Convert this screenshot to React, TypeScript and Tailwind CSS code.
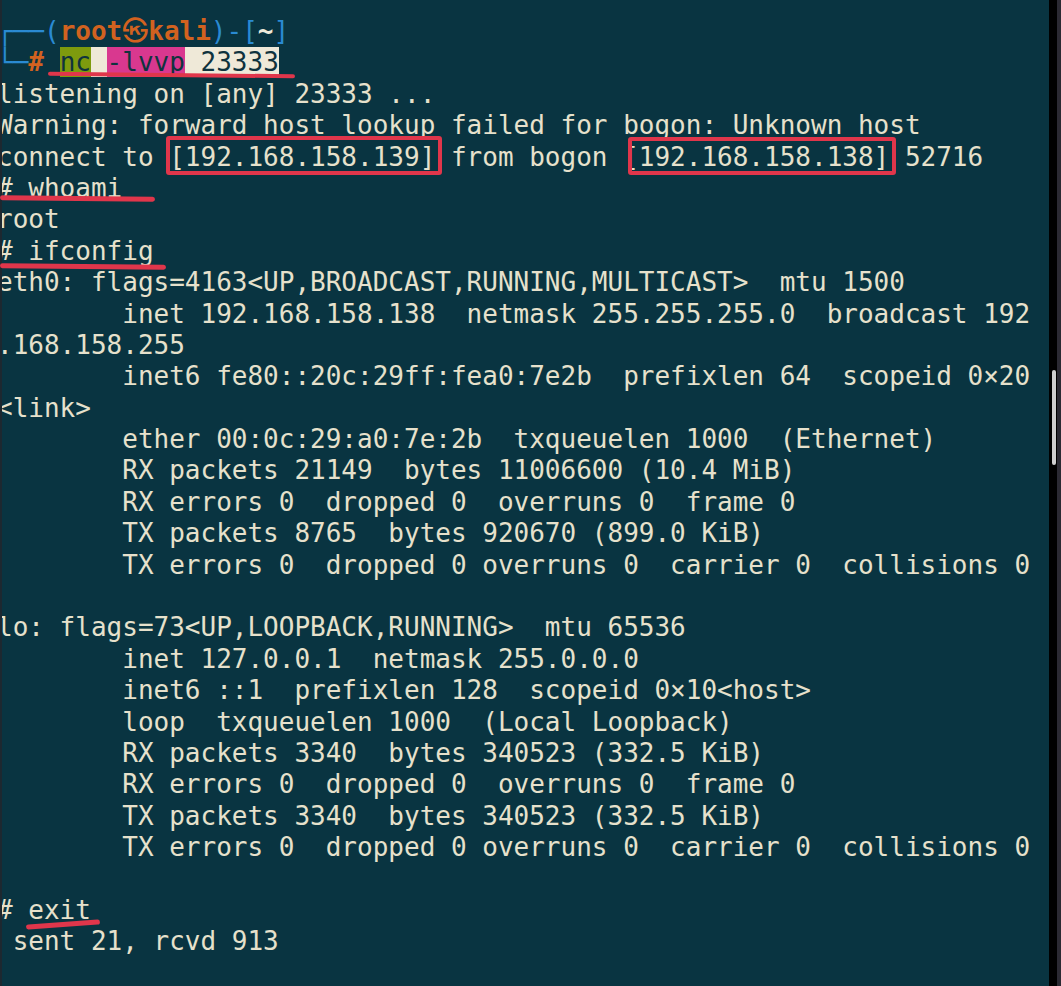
import React from 'react';

// plain output lines after the prompt
const lines: string[] = [
    'listening on [any] 23333 ...',
    'Warning: forward host lookup failed for bogon: Unknown host',
    'connect to [192.168.158.139] from bogon [192.168.158.138] 52716',
    '# whoami',
    'root',
    '# ifconfig',
    'eth0: flags=4163<UP,BROADCAST,RUNNING,MULTICAST>  mtu 1500',
    '        inet 192.168.158.138  netmask 255.255.255.0  broadcast 192',
    '.168.158.255',
    '        inet6 fe80::20c:29ff:fea0:7e2b  prefixlen 64  scopeid 0×20',
    '<link>',
    '        ether 00:0c:29:a0:7e:2b  txqueuelen 1000  (Ethernet)',
    '        RX packets 21149  bytes 11006600 (10.4 MiB)',
    '        RX errors 0  dropped 0  overruns 0  frame 0',
    '        TX packets 8765  bytes 920670 (899.0 KiB)',
    '        TX errors 0  dropped 0 overruns 0  carrier 0  collisions 0',
    '',
    'lo: flags=73<UP,LOOPBACK,RUNNING>  mtu 65536',
    '        inet 127.0.0.1  netmask 255.0.0.0',
    '        inet6 ::1  prefixlen 128  scopeid 0×10<host>',
    '        loop  txqueuelen 1000  (Local Loopback)',
    '        RX packets 3340  bytes 340523 (332.5 KiB)',
    '        RX errors 0  dropped 0  overruns 0  frame 0',
    '        TX packets 3340  bytes 340523 (332.5 KiB)',
    '        TX errors 0  dropped 0 overruns 0  carrier 0  collisions 0',
    '',
    '# exit',
    ' sent 21, rcvd 913',
];

const Line: React.FC<{ children?: React.ReactNode }> = ({ children }) => (
    <div className="h-[31.4px] whitespace-pre">{children}</div>
);

export default function App() {
    return (
        <div className="relative flex w-[1061px] h-[986px] overflow-hidden bg-[#093441]">
            {/* left window edge */}
            <div className="w-[2px] shrink-0 bg-[#1d2830]" />

            {/* terminal body */}
            <div className="flex-1 overflow-hidden bg-[#093441]">
                <div
                    className="-ml-[5px] pt-[16px] text-[26px] leading-[31.4px] text-[#e6e1cc]"
                    style={{ fontFamily: '"DejaVu Sans Mono", "Noto Sans CJK KR", monospace' }}
                >
                    <Line>
                        <span className="text-[#2a8ad2]">┌──(</span>
                        <span className="font-bold text-[#d2621f]">root㉿kali</span>
                        <span className="text-[#2a8ad2]">)-[</span>
                        <span className="font-bold text-[#eeeadb]">~</span>
                        <span className="text-[#2a8ad2]">]</span>
                    </Line>
                    <Line>
                        <span className="text-[#2a8ad2]">└─</span>
                        <span className="font-bold text-[#d2621f]">#</span>{' '}
                        <span className="bg-[#7e9b0e] text-[#10333e]">nc</span>
                        <span className="bg-[#efe9d8]"> </span>
                        <span className="bg-[#d9388f] text-[#10333e]">-lvvp</span>
                        <span className="bg-[#efe9d8] text-[#10333e]"> 23333</span>
                    </Line>
                    {lines.map((l, i) => (
                        <Line key={i}>{l}</Line>
                    ))}
                </div>
            </div>

            {/* scrollbar */}
            <div className="w-[8px] shrink-0 bg-black flex flex-col">
                <div className="mt-[370px] ml-[3px] w-[4px] h-[95px] rounded-full bg-[#cfcfcf]" />
            </div>
            <div className="w-[4px] shrink-0 bg-[#2b2a33]" />

            {/* red annotations drawn over the output */}
            <div className="absolute left-[48px] top-[73px] w-[247px] h-[4px] rounded-full bg-[#e0364b] rotate-[0.6deg]" />
            <div className="absolute left-[166px] top-[136px] w-[276px] h-[39px] rounded-[3px] border-[4px] border-[#e0364b]" />
            <div className="absolute left-[628px] top-[137px] w-[268px] h-[38px] rounded-[3px] border-[4px] border-[#e0364b]" />
            <div className="absolute left-0 top-[196px] w-[155px] h-[5px] rounded-full bg-[#e0364b] rotate-[0.6deg]" />
            <div className="absolute left-0 top-[264px] w-[166px] h-[5px] rounded-full bg-[#e0364b] rotate-[0.5deg]" />
            <div className="absolute left-[26px] top-[922px] w-[74px] h-[5px] rounded-full bg-[#e0364b] -rotate-[4deg]" />
        </div>
    );
}
